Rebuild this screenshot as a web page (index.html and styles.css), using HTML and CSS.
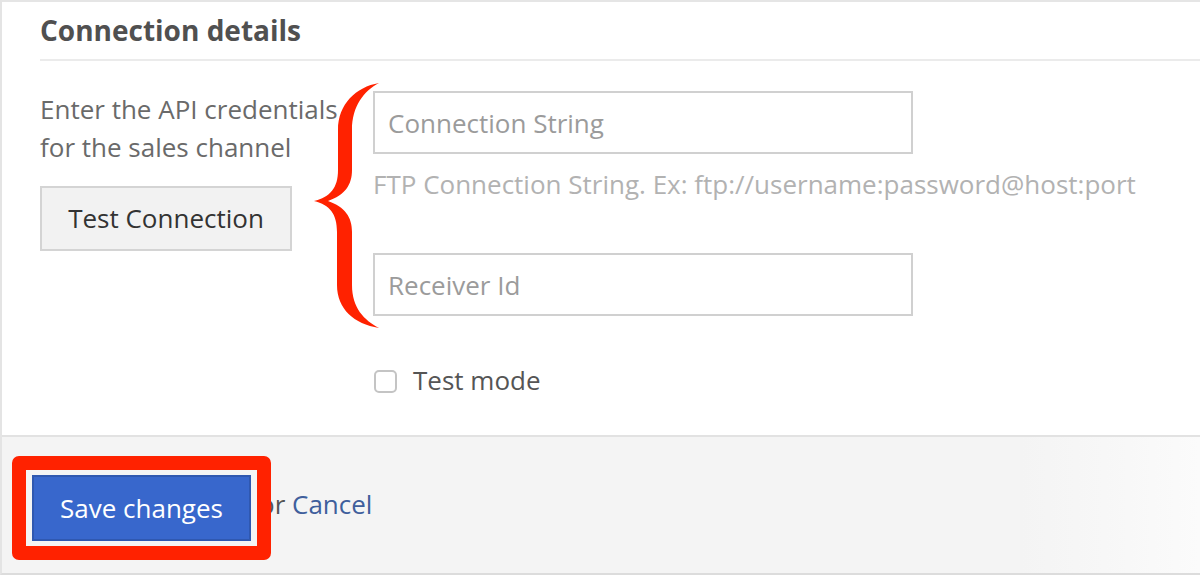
FILE: index.html
```html
<!DOCTYPE html>
<html>
<head>
<meta charset="utf-8">
<link rel="stylesheet" href="styles.css">
</head>
<body>
<div class="card">
  <div class="card-body">
    <h2 class="title">Connection details</h2>
    <div class="divider"></div>
    <div class="row">
      <div class="side">
        <p class="intro">Enter the API credentials for the sales channel</p>
        <button class="btn-test" type="button">Test Connection</button>
      </div>
      <div class="fields">
        <input class="field" type="text" placeholder="Connection String">
        <div class="help">FTP Connection String. Ex: ftp://username:password@host:port</div>
        <input class="field field-second" type="text" placeholder="Receiver Id">
        <label class="check">
          <span class="box"></span>
          <span>Test mode</span>
        </label>
      </div>
      <svg class="brace" viewBox="0 0 75 252" width="75" height="252">
        <path fill="#ff2200" d="M70,3 C47,7 29,24 29,50 L29,90 C29,108 21,117 5,121 C21,125 28,134 28,152 L28,205 C28,229 45,244 70,248 C55,240 43,228 43,205 L43,152 C43,137 36,127 19,121 C36,115 43,105 43,90 L43,50 C43,26 55,11 70,3 Z"/>
      </svg>
    </div>
  </div>
  <div class="footer">
    <button class="btn-save" type="button">Save changes</button>
    <span class="or">or <a class="cancel" href="#">Cancel</a></span>
    <div class="highlight"></div>
  </div>
</div>
</body>
</html>
```

FILE: styles.css
```css
html, body {
  margin: 0;
  padding: 0;
  background: #ffffff;
}

body {
  font-family: "Open Sans", "Liberation Sans", sans-serif;
  width: 1200px;
  height: 575px;
  overflow: hidden;
}

.card {
  box-sizing: border-box;
  width: 1200px;
  height: 575px;
  border-top: 2px solid #e5e5e5;
  border-left: 2px solid #e4e4e4;
  border-bottom: 2px solid #dcdcdc;
  display: flex;
  flex-direction: column;
}

.card-body {
  padding-left: 38px;
  padding-bottom: 37px;
}

.title {
  margin: 0;
  padding-top: 9px;
  font-size: 28px;
  line-height: 38px;
  font-weight: 700;
  color: #505050;
  margin-bottom: 10px;
}

.divider {
  height: 2px;
  background: #ebebeb;
}

.row {
  display: flex;
  position: relative;
}

.side {
  width: 333px;
  flex: none;
  padding-top: 29px;
}

.intro {
  margin: 0;
  font-size: 26px;
  line-height: 38px;
  color: #6a6a6a;
  width: 300px;
}

.btn-test {
  margin-top: 20px;
  box-sizing: border-box;
  height: 65px;
  width: 252px;
  padding: 0 0 2px;
  border: 2px solid #d4d4d4;
  background: #f2f2f2;
  font-family: "Open Sans", "Liberation Sans", sans-serif;
  font-size: 26px;
  line-height: 36px;
  color: #333333;
  text-align: center;
}

.fields {
  padding-top: 30px;
  display: flex;
  flex-direction: column;
  align-items: flex-start;
}

.field {
  box-sizing: border-box;
  width: 540px;
  height: 63px;
  border: 2px solid #d0d0d0;
  padding: 0 13px;
  font-family: "Open Sans", "Liberation Sans", sans-serif;
  font-size: 26px;
  color: #333;
  background: #fff;
  outline: none;
  margin: 0;
}

.field::placeholder {
  color: #9b9b9b;
}

.help {
  margin-top: 14px;
  font-size: 26px;
  line-height: 33px;
  color: #b2b2b2;
  white-space: nowrap;
}

.field-second {
  margin-top: 52px;
}

.check {
  margin-top: 46px;
  display: flex;
  align-items: center;
  gap: 16px;
  font-size: 26px;
  line-height: 36px;
  color: #555555;
}

.box {
  box-sizing: border-box;
  width: 23px;
  height: 23px;
  margin-left: 1px;
  border: 2px solid #c4c4c4;
  border-radius: 5px;
  background: #fff;
  margin-top: 2px;
}

.brace {
  position: absolute;
  left: 269px;
  top: 19px;
}

.footer {
  flex: 1;
  position: relative;
  border-top: 2px solid #e2e2e2;
  background: linear-gradient(to right, #f4f4f4 0%, #f4f4f4 85%, #f7f7f7 92%, #fbfbfb 100%);
  padding: 38px 0 0 30px;
  display: flex;
  align-items: flex-start;
}

.btn-save {
  box-sizing: border-box;
  width: 219px;
  height: 66px;
  padding: 0;
  border: 2px solid #2f58b0;
  background: #3867cc;
  color: #ffffff;
  font-family: "Open Sans", "Liberation Sans", sans-serif;
  font-size: 26px;
  line-height: 36px;
  text-align: center;
}

.or {
  margin-left: 8px;
  font-size: 26px;
  line-height: 36px;
  padding-top: 11px;
  color: #555555;
}

.cancel {
  color: #3f5f9c;
  text-decoration: none;
}

.highlight {
  position: absolute;
  left: 10px;
  top: 19px;
  width: 259px;
  height: 104px;
  box-sizing: border-box;
  border: 14px solid #ff2200;
  border-radius: 7px;
}
```
